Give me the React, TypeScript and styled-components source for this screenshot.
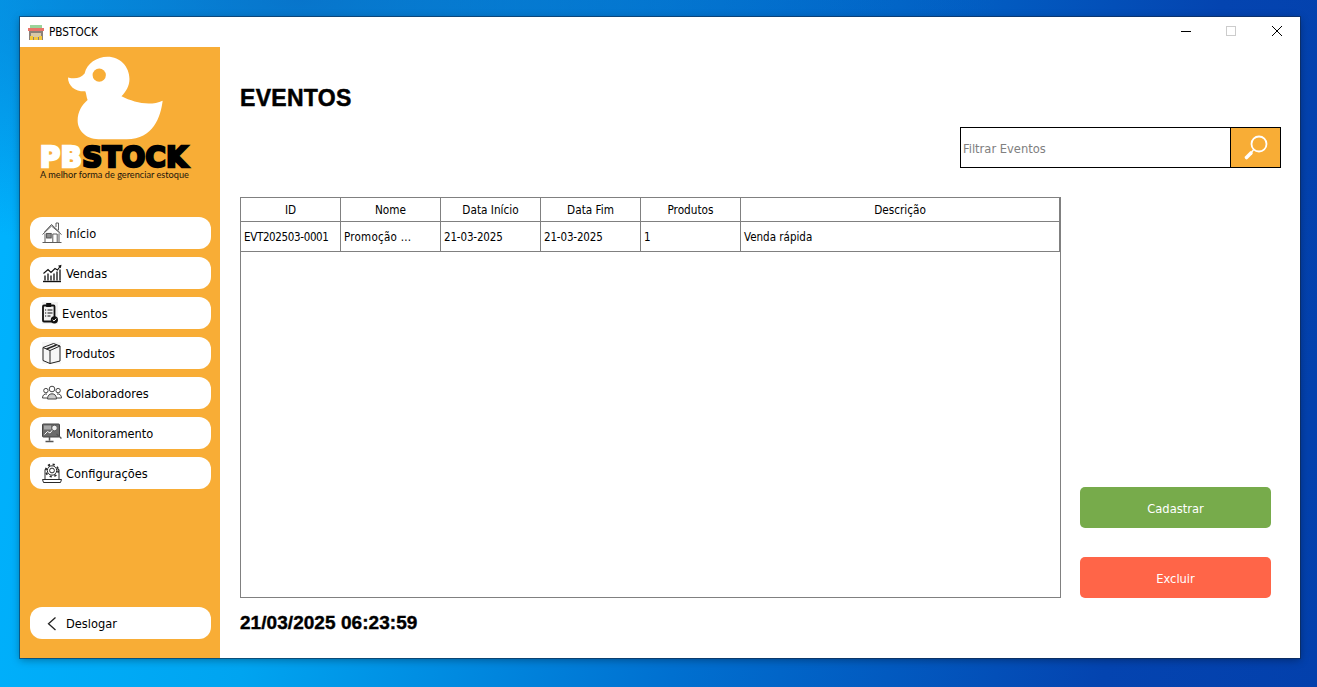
import styled, { createGlobalStyle } from 'styled-components';

const GlobalStyle = createGlobalStyle`
  html, body {
    margin: 0;
    padding: 0;
    width: 1317px;
    height: 687px;
    overflow: hidden;
  }
`;

const uiFont = `"DejaVu Sans", "Noto Sans", sans-serif`;
const orange = '#f8ad36';

const Desktop = styled.div`
  width: 1317px;
  height: 687px;
  box-sizing: border-box;
  padding: 17px 0 0 20px;
  background:
    radial-gradient(ellipse 700px 260px at 300px 0px, rgba(10, 100, 190, 0.75), rgba(10, 100, 190, 0) 100%),
    linear-gradient(100deg, #00b4ff 0%, #00a4f0 25%, #0070d0 55%, #0444b0 85%, #0340ac 100%);
`;

const Window = styled.div`
  width: 1280px;
  height: 641px;
  display: flex;
  flex-direction: column;
  background: #ffffff;
  box-shadow: 0 0 0 1px rgba(20, 40, 70, 0.55), 0 2px 8px rgba(0, 0, 0, 0.35);
  font-family: ${uiFont};
  font-stretch: condensed;
  color: #000000;
`;

const TitleBar = styled.div`
  height: 30px;
  display: flex;
  align-items: center;
  padding-left: 8px;
  font-size: 11.7px;
`;

const TitleText = styled.span`
  margin-left: 5px;
`;

const WindowControls = styled.div`
  margin-left: auto;
  margin-bottom: 2px;
  display: flex;
  align-items: center;
  padding-right: 18px;
`;

const ControlIcon = styled.svg`
  width: 10px;
  height: 10px;
  margin-left: 35px;
  &:last-child {
    margin-left: 36px;
  }
`;

const Body = styled.div`
  flex: 1;
  display: flex;
  min-height: 0;
`;

const Sidebar = styled.aside`
  width: 200px;
  background: ${orange};
  display: flex;
  flex-direction: column;
  padding: 0 9px 19px 10px;
  box-sizing: border-box;
`;

const LogoBlock = styled.div`
  height: 170px;
  display: flex;
  flex-direction: column;
  align-items: flex-start;
`;

const Duck = styled.svg`
  width: 97px;
  height: 84px;
  margin: 9px 0 0 37px;
`;

const LogoWord = styled.div`
  margin: 5px 0 0 10px;
  height: 24px;
  line-height: 24px;
  font-family: "DejaVu Sans", sans-serif;
  font-weight: 700;
  font-size: 27.5px;
  font-stretch: normal;
  letter-spacing: 0.5px;
  white-space: nowrap;
  paint-order: stroke fill;
`;

const LogoPart = styled.span<{ $light?: boolean }>`
  display: inline-block;
  height: 24px;
  line-height: 24px;
  overflow: visible;
  color: ${(p) => (p.$light ? '#ffffff' : '#000000')};
  -webkit-text-stroke: 2.6px ${(p) => (p.$light ? '#ffffff' : '#000000')};
`;

const Tagline = styled.div`
  margin: 2px 0 0 10px;
  font-family: Lato, sans-serif;
  font-size: 9.2px;
  line-height: 8px;
  font-stretch: normal;
  color: #1c150c;
  white-space: nowrap;
`;

const Nav = styled.nav`
  display: flex;
  flex-direction: column;
  gap: 8px;
  flex: 1;
`;

const NavButton = styled.button<{ $bottom?: boolean }>`
  height: 32px;
  width: 181px;
  flex: none;
  border: none;
  border-radius: 12px;
  background: #ffffff;
  display: flex;
  align-items: center;
  gap: 4px;
  padding: 0 0 0 12px;
  font-family: ${uiFont};
  font-stretch: condensed;
  font-size: 12.7px;
  color: #000000;
  margin-top: ${(p) => (p.$bottom ? 'auto' : '0')};
`;

const NavIcon = styled.svg<{ $w: number }>`
  width: ${(p) => p.$w}px;
  height: 22px;
  flex: none;
`;

const Main = styled.main`
  flex: 1;
  display: flex;
  flex-direction: column;
  padding: 0 19px 0 20px;
  min-width: 0;
`;

const Title = styled.h1`
  margin: 38px 0 0;
  height: 26px;
  line-height: 26px;
  font-family: "Liberation Sans", Arial, sans-serif;
  font-stretch: normal;
  font-size: 23px;
  font-weight: 700;
  letter-spacing: 0.3px;
  -webkit-text-stroke: 0.5px #000000;
`;

const SearchRow = styled.div`
  display: flex;
  justify-content: flex-end;
  margin-top: 16px;
`;

const SearchBox = styled.div`
  width: 321px;
  height: 41px;
  box-sizing: border-box;
  border: 1px solid #000000;
  display: flex;
`;

const SearchInput = styled.input`
  flex: 1;
  min-width: 0;
  border: none;
  outline: none;
  padding: 2px 2px 0;
  font-family: ${uiFont};
  font-stretch: condensed;
  font-size: 12.8px;
  &::placeholder {
    color: #808080;
    opacity: 1;
  }
`;

const SearchButton = styled.button`
  width: 50px;
  flex: none;
  border: none;
  border-left: 1px solid #000000;
  background: ${orange};
  display: flex;
  align-items: center;
  justify-content: center;
  padding: 0;
`;

const Content = styled.div`
  display: flex;
  gap: 19px;
  margin-top: 29px;
  height: 401px;
`;

const TableFrame = styled.div`
  width: 821px;
  box-sizing: border-box;
  border: 1px solid #808080;
`;

const Table = styled.table`
  table-layout: fixed;
  width: 819px;
  border-collapse: separate;
  border-spacing: 0;
`;

const HeadCell = styled.th<{ $w: number }>`
  width: ${(p) => p.$w}px;
  height: 24px;
  box-sizing: border-box;
  padding: 0;
  font-size: 11.7px;
  font-weight: 400;
  text-align: center;
  border-right: 1px solid #808080;
  border-bottom: 1px solid #808080;
`;

const Cell = styled.td<{ $spacing: number }>`
  height: 30px;
  box-sizing: border-box;
  padding: 0 3px;
  font-size: 11.5px;
  letter-spacing: ${(p) => p.$spacing}px;
  border-right: 1px solid #808080;
  border-bottom: 1px solid #808080;
  white-space: nowrap;
  overflow: hidden;
`;

const Actions = styled.div`
  width: 191px;
  display: flex;
  flex-direction: column;
  justify-content: flex-end;
  gap: 29px;
`;

const ActionButton = styled.button<{ $color: string }>`
  height: 41px;
  border: none;
  border-radius: 5px;
  padding: 2px 0 0;
  background: ${(p) => p.$color};
  color: #ffffff;
  font-family: ${uiFont};
  font-stretch: condensed;
  font-size: 12.8px;
`;

const Clock = styled.div`
  margin-top: 14px;
  height: 22px;
  line-height: 22px;
  font-family: "Liberation Sans", Arial, sans-serif;
  font-stretch: normal;
  font-weight: 700;
  font-size: 19px;
  letter-spacing: 0.05px;
  -webkit-text-stroke: 0.4px #000000;
`;

const columns = [
  { label: 'ID', width: 100, spacing: -0.35 },
  { label: 'Nome', width: 100, spacing: 0.25 },
  { label: 'Data Início', width: 100, spacing: -0.15 },
  { label: 'Data Fim', width: 100, spacing: -0.15 },
  { label: 'Produtos', width: 100, spacing: 0 },
  { label: 'Descrição', width: 319, spacing: 0 },
];

const rows = [['EVT202503-0001', 'Promoção ...', '21-03-2025', '21-03-2025', '1', 'Venda rápida']];

const HouseIcon = () => (
  <NavIcon $w={20} viewBox="0 0 20 22" fill="none" stroke="#4a4a4a" strokeWidth="0.9">
    <path d="M0.5 20.5h19M3 20V11.500M17 20V11.500M0.500 12.500 9.500 4 19.500 12.500M2.500 10 9.500 2.500 17.500 10" />
    <path d="M14 5V1h2.500V8" />
    <rect x="4.600" y="11.400" width="4.600" height="4.600" fill="#8f8f8f" />
    <path d="M10.800 20v-8h4.400v8" />
  </NavIcon>
);

const ChartIcon = () => (
  <NavIcon $w={20} viewBox="0 0 20 22" fill="none" stroke="#111111">
    <path d="M1 19.500h18" strokeWidth="1.400" />
    <path d="M3 18.500v-5M6 18.500v-7M9 18.500v-5M12 18.500v-7M15 18.500v-9M18 18.500v-11" strokeWidth="1.300" />
    <path d="M1.500 11.500 6 7.500l3 3 4-4 2.500 1.500L18 4.500" strokeWidth="1.100" />
    <path d="M16 3.700l3.500-1-.7 3.500z" fill="#111111" stroke="none" />
  </NavIcon>
);

const ClipboardIcon = () => (
  <NavIcon $w={16} viewBox="0 0 16 22" fill="none" stroke="#111111">
    <rect width="16" height="22" fill="#f2f2f2" stroke="none" />
    <rect x="1" y="3.500" width="11.500" height="16" rx="1" strokeWidth="1.800" />
    <rect x="4.200" y="1" width="5" height="4" fill="#111111" stroke="none" />
    <path d="M3 8h1.200M5.500 8h5M3 11h1.200M5.500 11h5M3 14h1.200M5.500 14h3" strokeWidth="1" />
    <circle cx="12.400" cy="17.800" r="3.600" fill="#111111" stroke="none" />
    <path d="M10.700 17.800l1.300 1.300 2.200-2.400" stroke="#ffffff" strokeWidth="1" />
  </NavIcon>
);

const BoxIcon = () => (
  <NavIcon $w={19} viewBox="0 0 19 22" fill="none" stroke="#222222" strokeWidth="1">
    <rect width="19" height="22" fill="#f6f6f6" stroke="none" />
    <path d="M1 5.500 11.500 1.500 18 4v15L8 21.500 1 18.500ZM1 5.500 8 8.500 18 4M8 8.500V21.500" />
    <path d="M4.500 7 14.500 3" strokeWidth="1.400" />
  </NavIcon>
);

const PeopleIcon = () => (
  <NavIcon $w={20} viewBox="0 0 20 22" fill="none" stroke="#444444" strokeWidth="1">
    <circle cx="10" cy="7" r="2.800" />
    <circle cx="3.900" cy="8.600" r="2.200" />
    <circle cx="16.100" cy="8.600" r="2.200" />
    <path d="M5.500 17c0-3.400 1.800-5.200 4.500-5.200s4.500 1.800 4.500 5.200z" fill="#cccccc" />
    <path d="M5 12.100c-2.400-.6-4.500.9-4.500 3.900H5M15 12.100c2.400-.6 4.500.9 4.500 3.900H15" />
  </NavIcon>
);

const MonitorIcon = () => (
  <NavIcon $w={20} viewBox="0 0 20 22" fill="none" stroke="#555555">
    <rect x="0.500" y="2" width="17" height="13" rx="0.800" fill="#6b6b6b" stroke="#444444" />
    <rect x="2" y="3.500" width="7" height="4" fill="#a8a8a8" stroke="none" />
    <path d="M2.500 12.500l3-3 2.500 1.500 3-3.500" stroke="#ffffff" strokeWidth="1" />
    <circle cx="12.500" cy="6" r="2.800" fill="#eeeeee" strokeWidth="0.900" />
    <path d="M14.500 12l5 4.500" strokeWidth="1.400" />
    <path d="M7.500 15v3.500M3.500 19.500h8" strokeWidth="1.500" />
  </NavIcon>
);

const GearLaptopIcon = () => (
  <NavIcon $w={20} viewBox="0 0 20 22" fill="none" stroke="#2a2a2a" strokeWidth="1">
    <path d="M3 17V7.500h1.500M17 17V7.500h-1.500M0.500 17.500h19l-1 3H1.500z" />
    <circle cx="10" cy="8.500" r="2.400" />
    <circle cx="10" cy="8.500" r="4.700" />
    <circle cx="10" cy="8.500" r="6.200" strokeDasharray="2.200 2.650" strokeWidth="1.800" />
  </NavIcon>
);

const BackIcon = () => (
  <NavIcon $w={20} viewBox="0 0 20 22" fill="none" stroke="#222222" strokeWidth="1.300">
    <path d="M13.500 5.500 6.500 11.800 13.500 18" />
  </NavIcon>
);

const navItems = [
  { label: 'Início', icon: <HouseIcon /> },
  { label: 'Vendas', icon: <ChartIcon /> },
  { label: 'Eventos', icon: <ClipboardIcon /> },
  { label: 'Produtos', icon: <BoxIcon /> },
  { label: 'Colaboradores', icon: <PeopleIcon /> },
  { label: 'Monitoramento', icon: <MonitorIcon /> },
  { label: 'Configurações', icon: <GearLaptopIcon /> },
];

export default function App() {
  return (
    <Desktop>
      <GlobalStyle />
      <Window>
        <TitleBar>
          <svg width="16" height="15" viewBox="0 0 16 15">
            <rect x="2" y="0" width="12" height="3" fill="#9ad49a" />
            <rect x="0" y="3" width="16" height="3" fill="#e8746a" />
            <rect x="1" y="6" width="14" height="9" fill="#8a8078" />
            <rect x="3" y="8" width="10" height="4" fill="#d8c8a8" />
            <rect x="2" y="11" width="3" height="4" fill="#f4c83c" />
            <rect x="6" y="12" width="4" height="3" fill="#f4c83c" />
            <rect x="11" y="11" width="3" height="4" fill="#f4c83c" />
          </svg>
          <TitleText>PBSTOCK</TitleText>
          <WindowControls>
            <ControlIcon viewBox="0 0 10 10">
              <path d="M0 5.500h10" stroke="#000000" strokeWidth="1" />
            </ControlIcon>
            <ControlIcon viewBox="0 0 10 10">
              <rect x="0.500" y="0.500" width="9" height="9" fill="none" stroke="#cccccc" />
            </ControlIcon>
            <ControlIcon viewBox="0 0 10 10">
              <path d="M0 0l10 10M10 0 0 10" stroke="#000000" strokeWidth="1" />
            </ControlIcon>
          </WindowControls>
        </TitleBar>
        <Body>
          <Sidebar>
            <LogoBlock>
              <Duck viewBox="110 18 292 252">
                <path
                  fill="#ffffff"
                  d="M113 82C135 88 150 84 163 70C170 40 200 20 232 20C270 20 298 50 298 87C298 108 288 125 274 139C312 158 360 170 398 152C392 200 370 268 290 268L205 268C165 268 142 240 142 212C142 185 155 165 172 150C168 140 168 130 165 124C135 125 113 108 113 82Z"
                />
                <circle cx="207" cy="75" r="20" fill={orange} />
              </Duck>
              <LogoWord>
                <LogoPart $light>PB</LogoPart>
                <LogoPart>STOCK</LogoPart>
              </LogoWord>
              <Tagline>A melhor forma de gerenciar estoque</Tagline>
            </LogoBlock>
            <Nav>
              {navItems.map((item) => (
                <NavButton key={item.label}>
                  {item.icon}
                  {item.label}
                </NavButton>
              ))}
              <NavButton $bottom>
                <BackIcon />
                Deslogar
              </NavButton>
            </Nav>
          </Sidebar>
          <Main>
            <Title>EVENTOS</Title>
            <SearchRow>
              <SearchBox>
                <SearchInput placeholder="Filtrar Eventos" />
                <SearchButton>
                  <svg width="26" height="26" viewBox="0 0 26 26" fill="none" stroke="#ffffff">
                    <circle cx="16" cy="9" r="7.500" strokeWidth="1.800" />
                    <path d="M10.500 15 8.800 16.800" strokeWidth="1.400" />
                    <path d="M8 18 3.500 22.500" strokeWidth="3.600" strokeLinecap="round" />
                  </svg>
                </SearchButton>
              </SearchBox>
            </SearchRow>
            <Content>
              <TableFrame>
                <Table>
                  <thead>
                    <tr>
                      {columns.map((c) => (
                        <HeadCell key={c.label} $w={c.width}>
                          {c.label}
                        </HeadCell>
                      ))}
                    </tr>
                  </thead>
                  <tbody>
                    {rows.map((row) => (
                      <tr key={row[0]}>
                        {row.map((value, i) => (
                          <Cell key={i} $spacing={columns[i].spacing}>
                            {value}
                          </Cell>
                        ))}
                      </tr>
                    ))}
                  </tbody>
                </Table>
              </TableFrame>
              <Actions>
                <ActionButton $color="#77ab4b">Cadastrar</ActionButton>
                <ActionButton $color="#ff6548">Excluir</ActionButton>
              </Actions>
            </Content>
            <Clock>21/03/2025 06:23:59</Clock>
          </Main>
        </Body>
      </Window>
    </Desktop>
  );
}
